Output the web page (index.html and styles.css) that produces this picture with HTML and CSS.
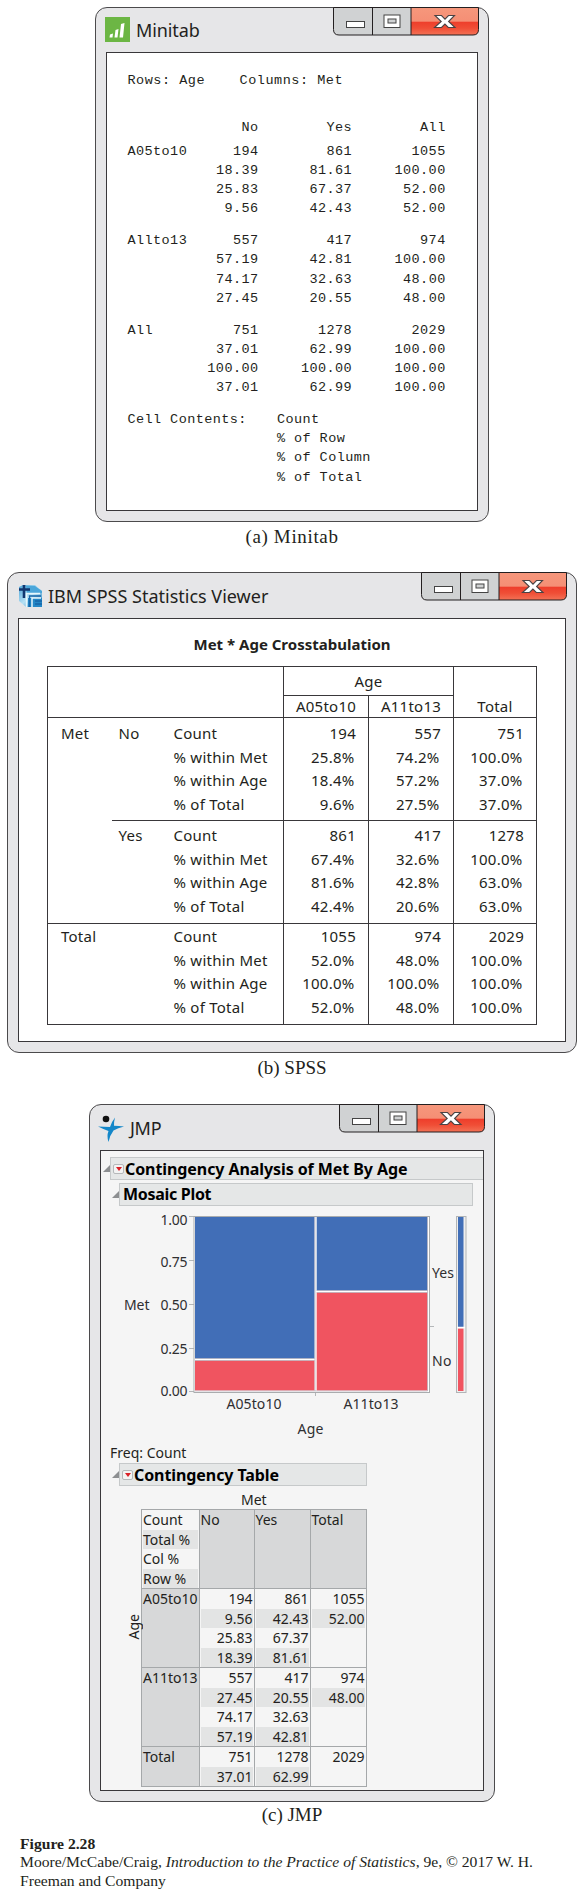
FILE: index.html
```html
<!DOCTYPE html>
<html lang="en">
<head>
<meta charset="utf-8">
<title>Figure 2.28</title>
<link rel="stylesheet" href="styles.css">
</head>
<body>
<svg class="defs" width="0" height="0">
  <defs>
    <linearGradient id="red" x1="0" y1="0" x2="0" y2="1">
      <stop offset="0" stop-color="#f6977c"/><stop offset=".5" stop-color="#f58f75"/>
      <stop offset=".53" stop-color="#ee3e2b"/><stop offset=".75" stop-color="#f04e36"/><stop offset="1" stop-color="#f37256"/>
    </linearGradient>
    <symbol id="controls" viewBox="0 0 146 29">
      <path d="M.5 .5V22.500Q.5 28 6 28H140Q145.500 28 145.500 22.500V.5Z" fill="#d0d2d3"/>
      <path d="M78 .5V28H140Q145.500 28 145.500 22.500V.5Z" fill="url(#red)"/>
      <path d="M.5 .5V22.500Q.5 28 6 28H140Q145.500 28 145.500 22.500V.5ZM39.500 .5V28M78 .5V28" fill="none" stroke="#231f20"/>
      <rect x="13.500" y="14.500" width="18" height="6" fill="#fff" stroke="#444"/>
      <rect x="51" y="8" width="16" height="12.500" fill="#fff" stroke="#444"/>
      <rect x="55" y="12" width="8" height="4" fill="#d0d2d3" stroke="#444"/>
      <path d="M102 8.500H108.500L112 12.200L115.500 8.500H121.500L115.600 14.500L122 20.500H115.300L111.900 17L108.500 20.500H101.500L108.200 14.500Z" fill="#fff" stroke="#4a4344" stroke-width="1.100"/>
    </symbol>
  </defs>
</svg>
<main class="figure">
  <section class="window minitab">
    <header class="titlebar">
      <svg class="logo" width="25" height="25" viewBox="0 0 25 25"><rect width="25" height="25" fill="#6cb644"/><path d="M5 17.500L8 16.500L7.500 20.500H4.500ZM10.500 13L13.500 12L12.500 20.500H9.500ZM16 7L19.500 6L18 20.500H14.500Z" fill="#fff"/></svg>
      <h2>Minitab</h2>
      <svg class="controls" width="146" height="29"><use href="#controls"/></svg>
    </header>
    <div class="pane">
      <pre class="intro">Rows: Age    Columns: Met</pre>
      <div class="mt-row mt-head"><pre></pre><pre>No</pre><pre>Yes</pre><pre>All</pre></div>
      <div class="mt-row"><pre>A05to10</pre><pre>194
18.39
25.83
9.56</pre><pre>861
81.61
67.37
42.43</pre><pre>1055
100.00
52.00
52.00</pre></div>
      <div class="mt-row"><pre>Allto13</pre><pre>557
57.19
74.17
27.45</pre><pre>417
42.81
32.63
20.55</pre><pre>974
100.00
48.00
48.00</pre></div>
      <div class="mt-row"><pre>All</pre><pre>751
37.01
100.00
37.01</pre><pre>1278
62.99
100.00
62.99</pre><pre>2029
100.00
100.00
100.00</pre></div>
      <div class="mt-contents"><pre>Cell Contents:</pre><pre>Count
% of Row
% of Column
% of Total</pre></div>
    </div>
  </section>
  <p class="label label-a">(a) Minitab</p>

  <section class="window spss">
    <header class="titlebar">
      <svg class="logo" width="25" height="25" viewBox="0 0 25 25">
        <defs><linearGradient id="sp" x1="0" y1="0" x2="1" y2="1"><stop offset="0" stop-color="#4ba3d8"/><stop offset=".5" stop-color="#b7e1f4"/><stop offset="1" stop-color="#1276b8"/></linearGradient></defs>
        <path d="M1 3L5 1H17L24 7V23H8L1 17Z" fill="url(#sp)"/>
        <path d="M8 2H17L24 7V9H9Z" fill="#4aa6da"/>
        <path d="M10 14H24V23H10Z" fill="#2387c6"/>
        <path d="M6 1V14M1 5.500H12" stroke="#12366f" stroke-width="2.600" fill="none"/>
        <path d="M8.500 23V9.500H22M14 23V14H23" stroke="#e6f6fc" stroke-width="1.500" fill="none"/>
        <path d="M11.500 23V12H23M17 17H24M17 20H24" stroke="#1765a8" stroke-width="1.300" fill="none"/>
      </svg>
      <h2>IBM SPSS Statistics Viewer</h2>
      <svg class="controls" width="146" height="29"><use href="#controls"/></svg>
    </header>
    <div class="pane">
      <h3>Met * Age Crosstabulation</h3>
      <table class="crosstab">
        <colgroup><col class="c1"><col class="c2"><col class="c3"><col class="c4"><col class="c4"><col class="c6"></colgroup>
        <tr class="h1"><th colspan="3" rowspan="2"></th><th colspan="2" class="line">Age</th><th rowspan="2" class="line tot">Total</th></tr>
        <tr class="h2"><th class="line">A05to10</th><th class="line">A11to13</th></tr>
        <tr class="g1"><td class="met">Met</td><td>No</td>
          <td class="names"><p>Count</p><p>% within Met</p><p>% within Age</p><p>% of Total</p></td>
          <td class="n"><p>194</p><p>25.8%</p><p>18.4%</p><p>9.6%</p></td>
          <td class="n"><p>557</p><p>74.2%</p><p>57.2%</p><p>27.5%</p></td>
          <td class="n"><p>751</p><p>100.0%</p><p>37.0%</p><p>37.0%</p></td></tr>
        <tr class="g2"><td class="met"></td><td class="top">Yes</td>
          <td class="names top"><p>Count</p><p>% within Met</p><p>% within Age</p><p>% of Total</p></td>
          <td class="n top"><p>861</p><p>67.4%</p><p>81.6%</p><p>42.4%</p></td>
          <td class="n top"><p>417</p><p>32.6%</p><p>42.8%</p><p>20.6%</p></td>
          <td class="n top"><p>1278</p><p>100.0%</p><p>63.0%</p><p>63.0%</p></td></tr>
        <tr class="g3"><td class="met top" colspan="2">Total</td>
          <td class="names top"><p>Count</p><p>% within Met</p><p>% within Age</p><p>% of Total</p></td>
          <td class="n top"><p>1055</p><p>52.0%</p><p>100.0%</p><p>52.0%</p></td>
          <td class="n top"><p>974</p><p>48.0%</p><p>100.0%</p><p>48.0%</p></td>
          <td class="n top"><p>2029</p><p>100.0%</p><p>100.0%</p><p>100.0%</p></td></tr>
      </table>
    </div>
  </section>
  <p class="label label-b">(b) SPSS</p>

  <section class="window jmp">
    <header class="titlebar">
      <svg class="logo" width="26" height="27" viewBox="0 0 26 27"><circle cx="8" cy="4" r="3.300" fill="#111"/><path d="M17 2.500Q15.800 7 16 10.800Q21 11 26 11.500Q20 13 15.500 15.500Q12 20 10.500 27Q8.500 21 10.500 16Q5 14 0 11.500Q6 11.700 12 12Q13.500 7 17 2.500Z" fill="#1487c9"/></svg>
      <h2>JMP</h2>
      <svg class="controls" width="146" height="29"><use href="#controls"/></svg>
    </header>
    <div class="pane">
      <div class="outline o1"><i class="tri"></i><div class="bar"><i class="menu"></i><b>Contingency Analysis of Met By Age</b></div></div>
      <div class="outline o2"><i class="tri"></i><div class="bar"><b>Mosaic Plot</b></div></div>
      <svg class="mosaic" width="382" height="240" viewBox="101 1205 382 240">
        <g fill="none" stroke="#b4b7b9"><path d="M189 1216.500H194M189 1260.500H194M189 1304.500H194M189 1348.500H194M189 1391.500H194M430 1326.500H434M315.500 1392V1396"/></g>
        <rect x="194" y="1216.500" width="235.500" height="176" fill="#fff" stroke="#a9acae"/>
        <path d="M195 1217H314.500V1358.500H195ZM316.700 1217H427.500V1290.500H316.700Z" fill="#416eb7"/>
        <path d="M195 1360.500H314.500V1390.500H195ZM316.700 1292.500H427.500V1390.500H316.700Z" fill="#f05460"/>
        <path d="M195 1358.500H314.500M195 1360.500H314.500M316.700 1290.500H427.500M316.700 1292.500H427.500M195 1391H427.500M315 1217V1391M427.500 1217V1391" stroke="#b5b0ba" stroke-width=".7" fill="none"/>
        <rect x="456.500" y="1216.500" width="9.500" height="176" fill="#eee" stroke="#b1b4b6"/>
        <rect x="458" y="1217" width="5.500" height="110" fill="#416eb7"/><rect x="458" y="1328.500" width="5.500" height="62.500" fill="#f05460"/><path d="M457 1327.500H465" stroke="#fff" stroke-width="1.500"/>
        <g class="plot-text">
          <text x="160.500" y="1224.500" textLength="27">1.00</text><text x="160.500" y="1266.500" textLength="27">0.75</text><text x="160.500" y="1310" textLength="27">0.50</text><text x="160.500" y="1354" textLength="27">0.25</text><text x="160.500" y="1395.500" textLength="27">0.00</text>
          <text x="124" y="1310" textLength="25.500">Met</text><text x="432" y="1277.500" textLength="22">Yes</text><text x="432" y="1365.500" textLength="19.500">No</text>
          <text x="226.500" y="1409" textLength="55">A05to10</text><text x="343.500" y="1409" textLength="55">A11to13</text><text x="297.500" y="1433.500" textLength="26">Age</text>
        </g>
      </svg>
      <p class="freq">Freq: Count</p>
      <div class="outline o3"><i class="tri"></i><div class="bar"><i class="menu"></i><b>Contingency Table</b></div></div>
      <p class="met-title">Met</p>
      <div class="jwrap"><span class="age">Age</span>
      <table class="jtable">
        <colgroup><col class="j1"><col class="j2"><col class="j3"><col class="j3"></colgroup>
        <tr><td class="key"><p>Count</p><p>Total %</p><p>Col %</p><p>Row %</p></td><th>No</th><th>Yes</th><th>Total</th></tr>
        <tr><th>A05to10</th><td><p>194</p><p>9.56</p><p>25.83</p><p>18.39</p></td><td><p>861</p><p>42.43</p><p>67.37</p><p>81.61</p></td><td><p>1055</p><p>52.00</p></td></tr>
        <tr><th>A11to13</th><td><p>557</p><p>27.45</p><p>74.17</p><p>57.19</p></td><td><p>417</p><p>20.55</p><p>32.63</p><p>42.81</p></td><td><p>974</p><p>48.00</p></td></tr>
        <tr><th>Total</th><td><p>751</p><p>37.01</p></td><td><p>1278</p><p>62.99</p></td><td><p>2029</p></td></tr>
      </table></div>
    </div>
  </section>
  <p class="label label-c">(c) JMP</p>
  <footer class="credit"><strong>Figure 2.28</strong><p>Moore/McCabe/Craig, <em>Introduction to the Practice of Statistics</em>, 9e, © 2017 W. H.</p><p>Freeman and Company</p></footer>
</main>
</body>
</html>
```

FILE: styles.css
```css
* { box-sizing: border-box; }
body { margin: 0; background: #fff; color: #231f20; font-family: "Noto Sans", sans-serif; }
p, h2, h3, pre { margin: 0; font-weight: 400; }
.defs { display: block; height: 0; }
.figure { width: 584px; height: 1897px; padding-top: 7px; overflow: hidden; display: flex; flex-direction: column; }

/* Window frames */
.window { flex: none; border: 1px solid #4b4a4c; border-radius: 12px; background: #e6e6e8; padding: 0 10px 10px; display: flex; flex-direction: column; }
.titlebar { flex: none; height: 44px; display: flex; align-items: flex-start; }
.logo { flex: none; margin-top: 9px; margin-left: -1px; }
.titlebar h2 { flex: 1; font-size: 18px; line-height: 24px; margin: 10px 0 0 6px; white-space: nowrap; }
.controls { flex: none; margin: -1px -1px 0 0; }
.pane { flex: 1; border: 1px solid #39373a; background: #fff; }
.label { flex: none; font-family: "Liberation Serif", serif; font-size: 19px; line-height: 24px; text-align: center; }

/* Minitab */
.minitab { width: 394px; height: 515px; margin-left: 95px; }
.minitab h2 { letter-spacing: -.1px; }
.minitab .pane { padding: 17.500px 0 0 20.500px; }
.minitab pre { font: 13.500px/19.200px "Liberation Mono", monospace; letter-spacing: .42px; min-height: 19.200px; }
.minitab .intro { letter-spacing: .52px; }
.mt-row { display: grid; grid-template-columns: 37.400px 93.600px 93.600px 93.600px; margin-bottom: 12.600px; }
.mt-row pre { text-align: right; }
.mt-row pre:first-child { text-align: left; }
.mt-head { margin: 28.200px 0 4.700px; }
.mt-contents { display: grid; grid-template-columns: 149.500px 1fr; }
.label-a { margin: 3px 0 23px; letter-spacing: .65px; }

/* SPSS */
.spss { width: 570px; height: 481px; margin-left: 7px; }
.spss .titlebar, .jmp .titlebar { height: 45px; }
.spss .logo { margin: 11px 0 0 0; }
.spss h2 { margin: 11px 0 0 5px; }
.spss .pane { padding-left: 28px; }
.spss h3 { font-weight: 700; font-size: 15px; line-height: 20px; margin: 14.500px 0 12.500px; width: 490px; text-align: center; }
.crosstab { width: 489px; table-layout: fixed; border-collapse: collapse; border: 1px solid #39373a; font-size: 15px; letter-spacing: .25px; }
.c1 { width: 64px; } .c2 { width: 54px; } .c3 { width: 118px; } .c4 { width: 85px; } .c6 { width: 83px; }
.crosstab th, .crosstab td { padding: 0; font-weight: 400; text-align: left; vertical-align: top; line-height: 23.600px; white-space: nowrap; }
.crosstab th { text-align: center; line-height: 20px; border-bottom: 1px solid #39373a; }
.crosstab .line, .crosstab .n { border-left: 1px solid #39373a; }
.crosstab .h1 th { padding-top: 4px; }
.crosstab .h1 .tot { padding-top: 29px; }
.h1 { height: 29px; } .h2 { height: 22px; } .g1 { height: 103px; } .g2 { height: 103px; } .g3 { height: 101px; }
.crosstab .g1 td { padding-top: 4px; } .crosstab .g2 td { padding-top: 3px; } .crosstab .g3 td { padding-top: 1px; }
.crosstab td:nth-child(2) { padding-left: 7px; }
.crosstab td.met { padding-left: 13px; }
.crosstab td.names { padding-left: 8px; }
.crosstab td.n { text-align: right; padding-right: 13.500px; padding-left: 0; }
.crosstab .n p:first-child { margin-right: -1.500px; }
.crosstab .top { border-top: 1px solid #39373a; }
.label-b { margin: 3px 0 24px; }

/* JMP */
.jmp { width: 406px; height: 698px; margin-left: 89px; }
.jmp .logo { margin: 10px 0 0 -2px; }
.jmp h2 { margin: 10.500px 0 0 6px; letter-spacing: -.3px; }
.jmp .pane { background: #f5f5f5; font-size: 14px; padding-top: 6px; }
.outline { display: flex; align-items: center; height: 23px; }
.tri { width: 0; height: 0; border-left: 7px solid transparent; border-bottom: 7px solid #8d8f91; }
.bar { height: 23px; flex: 1; border: 1px solid #c6c9ca; background: #e5e7e7; display: flex; align-items: center; color: #000; font-size: 16px; line-height: 20px; letter-spacing: -.08px; white-space: nowrap; }
.o1 { padding-left: 2px; } .o1 .bar { border-right: 0; padding-left: 2px; }
.o2 { margin: 2.500px 10px 0 11px; } .o2 .bar { padding-left: 2px; letter-spacing: -.3px; }
.o3 { margin-left: 11px; width: 255px; } .o3 .bar { padding-left: 2px; }
.o1 b, .o2 b, .o3 b { margin-left: 1px; }
.menu { width: 11px; height: 10px; border: 1px solid #b5b8ba; border-radius: 2px; background: #f3f3f3; display: flex; justify-content: center; align-items: center; }
.menu::after { content: ""; border: 3px solid transparent; border-top: 4px solid #d92027; border-bottom: 0; }
.mosaic { display: block; margin-top: -.5px; }
.plot-text { font-size: 14px; fill: #2f2f31; }
.freq { margin-left: 9px; margin-top: -2px; height: 20px; line-height: 20px; white-space: nowrap; }
.met-title { margin: 5px 0 0 140px; height: 18px; line-height: 18px; }
.jwrap { display: flex; align-items: center; }
.age { writing-mode: vertical-rl; transform: rotate(180deg); width: 15px; line-height: 15px; margin-left: 25px; margin-top: -43px; }
.jtable { width: 225px; table-layout: fixed; border-collapse: collapse; line-height: 19.700px; }
.j1 { width: 57.500px; } .j2 { width: 55px; } .j3 { width: 56px; }
.jtable td, .jtable th { padding: 0 1px; border: 1px solid #a5a8aa; text-align: right; vertical-align: top; font-weight: 400; white-space: nowrap; }
.jtable th { background: #d7d8d9; text-align: left; padding: 0 0 0 1px; }
.jtable p { height: 19.500px; }
.jtable p:nth-child(even) { background: #e3e4e4; }
.jtable td.key { text-align: left; }
.label-c { margin-top: 1px; }

.credit { margin: 7.500px 0 0 20px; font: 15.630px/18.800px "Liberation Serif", serif; white-space: nowrap; }
```
